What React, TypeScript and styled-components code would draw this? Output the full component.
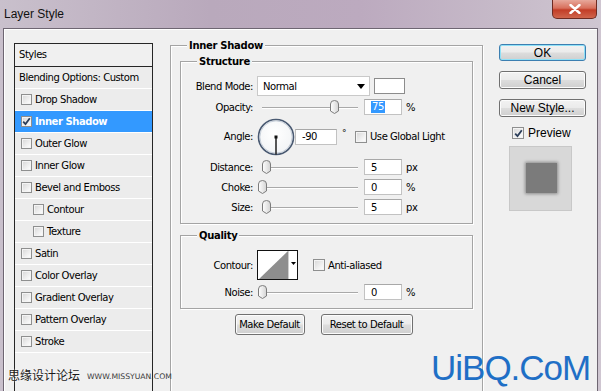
import React from 'react';
import styled, { createGlobalStyle } from 'styled-components';

const Global = createGlobalStyle`
  html, body { margin: 0; padding: 0; }
  body {
    width: 601px; height: 391px; overflow: hidden;
    font-family: "DejaVu Sans", Verdana, sans-serif; font-size: 10px; letter-spacing: -0.45px; color: #000;
  }
  * { box-sizing: border-box; }
`;

const Window = styled.div`
  position: relative;
  width: 601px;
  height: 391px;
  overflow: hidden;
  display: flex;
  flex-direction: column;
  background: linear-gradient(90deg, #c9c0cc 0%, #b9a9bc 35%, #bcaabf 60%, #c7bbc9 85%, #cfc6d1 100%);
`;

const TitleBar = styled.div`
  height: 28px;
  flex: none;
  display: flex;
  align-items: flex-start;
  padding-left: 4px;
`;

const Title = styled.div`
  font-family: "Liberation Sans", Arial, sans-serif;
  font-size: 12px;
  letter-spacing: 0;
  line-height: 14px;
  margin-top: 7px;
  color: #111;
`;

const CloseButton = styled.div`
  margin-left: auto;
  margin-right: 4px;
  width: 45px;
  height: 19px;
  border: 1px solid #6e2b22;
  border-top: none;
  border-radius: 0 0 5px 5px;
  background: linear-gradient(180deg, #e7a89b 0%, #d8705c 45%, #c23d27 55%, #d0654c 100%);
  display: flex;
  align-items: center;
  justify-content: center;
`;

const Body = styled.div`
  flex: 1;
  min-height: 0;
  margin: 0 3px;
  background: #f0f0f0;
  border: 1px solid #6e6672;
  border-bottom: none;
  box-shadow: inset 1px 1px 0 #ffffff;
  display: flex;
  align-items: stretch;
  padding: 14px 0 0 10px;
`;

/* ---------- styles list ---------- */
const StylesList = styled.div`
  width: 139px;
  flex: none;
  border-left: 1px solid #262626;
  border-right: 1px solid #262626;
  display: flex;
  flex-direction: column;
  margin-bottom: -4px;
`;

const ListHeader = styled.div`
  height: 24px;
  border-top: 1px solid #262626;
  border-bottom: 1px solid #262626;
  padding-left: 4px;
  line-height: 22px;
`;

const ListRow = styled.div<{ $selected?: boolean; $indent?: number }>`
  height: 22px;
  flex: none;
  border-bottom: 1px solid #ffffff;
  display: flex;
  align-items: center;
  gap: 3px;
  padding-left: ${(p) => p.$indent ?? 6}px;
  background: ${(p) => (p.$selected ? '#3399ff' : '#ececec')};
  color: ${(p) => (p.$selected ? '#ffffff' : '#000')};
  font-weight: ${(p) => (p.$selected ? 'bold' : 'normal')};
`;

const Box = styled.span<{ $size?: number }>`
  width: ${(p) => p.$size ?? 11}px;
  height: ${(p) => p.$size ?? 11}px;
  flex: none;
  border: 1px solid #8e8f8f;
  background: linear-gradient(135deg, #d6d6d6 0%, #f4f4f4 70%, #ffffff 100%);
  box-shadow: inset 0 0 0 1px #f4f4f4;
  display: inline-flex;
  align-items: center;
  justify-content: center;
`;

const CheckBox: React.FC<{ checked?: boolean; size?: number }> = ({ checked, size }) => (
  <Box $size={size}>
    {checked && (
      <svg width="9" height="9" viewBox="0 0 9 9">
        <path d="M1.2 4.6 L3.5 7 L7.8 1.2" fill="none" stroke="#2b3e5a" strokeWidth="1.8" />
      </svg>
    )}
  </Box>
);

/* ---------- group boxes ---------- */
const Middle = styled.div`
  width: 313px;
  flex: none;
  margin-left: 17px;
  margin-top: 2px;
  display: flex;
  flex-direction: column;
`;

const Group = styled.div<{ $height?: number; $mt?: number; $pt?: number; $px?: number }>`
  position: relative;
  border: 1px solid #a4a4a4;
  box-shadow: inset 1px 1px 0 #ffffff, 1px 1px 0 #ffffff;
  margin-top: ${(p) => p.$mt ?? 0}px;
  padding: ${(p) => p.$pt ?? 14}px ${(p) => p.$px ?? 0}px 0;
  ${(p) => (p.$height ? `height: ${p.$height}px; flex: none;` : 'flex: 1; margin-bottom: -12px;')}
  display: flex;
  flex-direction: column;
`;

const GroupTitle = styled.div`
  position: absolute;
  top: -7px;
  left: 16px;
  padding: 0 2px;
  line-height: 13px;
  font-weight: bold;
  letter-spacing: -0.3px;
  background: #f0f0f0;
`;

const Row = styled.div<{ $h: number; $mt?: number }>`
  height: ${(p) => p.$h}px;
  margin-top: ${(p) => p.$mt ?? 0}px;
  flex: none;
  display: flex;
  align-items: center;
`;

const Label = styled.div`
  width: 72px;
  flex: none;
  text-align: right;
  margin-right: 4px;
`;

const Select = styled.div`
  width: 113px;
  height: 20px;
  background: #ffffff;
  border: 1px solid #c9c9c9;
  display: flex;
  align-items: center;
  justify-content: space-between;
  padding: 0 4px 0 5px;
`;

const Swatch = styled.div`
  width: 31px;
  height: 16px;
  margin-left: 4px;
  background: #ffffff;
  border: 1px solid #8c8c8c;
`;

const SliderWrap = styled.div`
  position: relative;
  width: 107px;
  height: 16px;
  flex: none;
`;

const Track = styled.div`
  position: absolute;
  left: 5px;
  top: 8px;
  width: 96px;
  height: 2px;
  border-top: 1px solid #a9a9a9;
  border-bottom: 1px solid #ffffff;
`;

const ThumbHolder = styled.div`
  position: absolute;
  top: 1px;
  width: 9px;
  height: 14px;
`;

const Slider: React.FC<{ pos: number }> = ({ pos }) => (
  <SliderWrap>
    <Track />
    <ThumbHolder style={{ left: 5 + pos - 4.5 }}>
      <svg width="9" height="14" viewBox="0 0 9 14">
        <defs>
          <linearGradient id="tg" x1="0" y1="0" x2="1" y2="0">
            <stop offset="0" stopColor="#ffffff" />
            <stop offset="1" stopColor="#d4d4d4" />
          </linearGradient>
        </defs>
        <path d="M0.5 4 Q0.5 0.5 4.5 0.5 Q8.5 0.5 8.5 4 L8.5 11 L4.5 13.5 L0.5 11 Z" fill="url(#tg)" stroke="#7c7c7c" />
      </svg>
    </ThumbHolder>
  </SliderWrap>
);

const Input = styled.div<{ $w?: number }>`
  width: ${(p) => p.$w ?? 38}px;
  height: 16px;
  flex: none;
  background: #ffffff;
  border: 1px solid #c2c2c2;
  border-top-color: #a8a8a8;
  padding-left: 6px;
  display: flex;
  align-items: center;
`;

const Highlight = styled.span`
  background: #3399ff;
  color: #ffffff;
  padding: 0 1px;
  line-height: 12px;
`;

const Unit = styled.span`
  margin-left: 4px;
`;

const Degree = styled.span`
  width: 13px;
  margin-left: 5px;
  align-self: flex-start;
  margin-top: 10px;
  font-size: 9px;
`;

const CheckLabel = styled.span`
  margin-left: 3px;
`;

const ButtonRow = styled.div`
  display: flex;
  justify-content: center;
  gap: 16px;
  margin-top: 5px;
  margin-left: -6px;
`;

const Button = styled.div<{ $w: number; $h?: number; $mt?: number; $default?: boolean; $big?: boolean }>`
  width: ${(p) => p.$w}px;
  height: ${(p) => p.$h ?? 21}px;
  margin-top: ${(p) => p.$mt ?? 0}px;
  flex: none;
  border: 1px solid ${(p) => (p.$default ? '#3c7fb1' : '#707070')};
  border-radius: 3px;
  background: linear-gradient(180deg, #f2f2f2 0%, #ebebeb 48%, #dddddd 52%, #cfcfcf 100%);
  box-shadow: inset 0 0 0 1px ${(p) => (p.$default ? '#8fe1f7' : '#fcfcfc')};
  display: flex;
  align-items: center;
  justify-content: center;
  font-family: ${(p) => (p.$big ? '"Liberation Sans", Arial, sans-serif' : '"DejaVu Sans", Verdana, sans-serif')};
  font-size: ${(p) => (p.$big ? 12 : 10)}px;
  letter-spacing: ${(p) => (p.$big ? 0 : -0.45)}px;
`;

const ContourBox = styled.div`
  width: 41px;
  height: 30px;
  border: 1px solid #111;
  background: #fff;
  display: flex;
`;

const ContourArrow = styled.div`
  flex: 1;
  border-left: 1px solid #cfcfcf;
  display: flex;
  align-items: center;
  justify-content: center;
  padding-bottom: 4px;
`;

/* ---------- right column ---------- */
const RightCol = styled.div`
  width: 87px;
  flex: none;
  margin-left: 16px;
  margin-top: 1px;
  display: flex;
  flex-direction: column;
`;

const PreviewRow = styled.div`
  margin-top: 10px;
  height: 12px;
  padding-left: 13px;
  display: flex;
  align-items: center;
  gap: 4px;
  font-family: "Liberation Sans", Arial, sans-serif;
  font-size: 12px;
  letter-spacing: 0;
`;

const PreviewSwatch = styled.div`
  margin-top: 7px;
  margin-left: 10px;
  width: 63px;
  height: 65px;
  background: #d8d8d8;
  border: 1px solid #c8c8c8;
  padding: 16px 0 0 16px;
`;

const PreviewSquare = styled.div`
  width: 31px;
  height: 30px;
  background: #7b7b7b;
  box-shadow: 0 0 3px 1px #8a8a8a;
  filter: blur(0.6px);
`;

/* ---------- watermarks ---------- */
const Watermark = styled.div`
  position: absolute;
  left: 8px;
  top: 366px;
  display: flex;
  align-items: center;
  gap: 7px;
  letter-spacing: 0;
`;

const WmCJK = styled.span`
  font-family: "Noto Sans CJK SC", sans-serif;
  font-size: 12px;
  color: #1a1a1a;
  text-shadow: 0 0 2px #ffffff;
`;

const WmLatin = styled.span`
  font-family: "DejaVu Sans", sans-serif;
  font-size: 7.7px;
  color: #3a3a3a;
  margin-top: 3px;
`;

const Brand = styled.div`
  position: absolute;
  left: 431px;
  top: 350px;
  font-family: "Liberation Sans", Arial, sans-serif;
  font-size: 35px;
  line-height: 35px;
  letter-spacing: -1px;
  color: #1f6fc6;
`;

const styleRows: { name: string; checked?: boolean; selected?: boolean; indent?: number }[] = [
  { name: 'Drop Shadow' },
  { name: 'Inner Shadow', checked: true, selected: true },
  { name: 'Outer Glow' },
  { name: 'Inner Glow' },
  { name: 'Bevel and Emboss' },
  { name: 'Contour', indent: 18 },
  { name: 'Texture', indent: 18 },
  { name: 'Satin' },
  { name: 'Color Overlay' },
  { name: 'Gradient Overlay' },
  { name: 'Pattern Overlay' },
  { name: 'Stroke' },
];

const Dial = () => (
  <svg width="38" height="38" viewBox="0 0 38 38" style={{ flex: 'none' }}>
    <defs>
      <radialGradient id="dg" cx="0.45" cy="0.4" r="0.6">
        <stop offset="0" stopColor="#ffffff" />
        <stop offset="1" stopColor="#f2f4f6" />
      </radialGradient>
    </defs>
    <circle cx="19" cy="19" r="17.5" fill="url(#dg)" stroke="#4a5a72" strokeWidth="1.6" />
    <circle cx="19" cy="19" r="16.2" fill="none" stroke="#b9c3cf" strokeWidth="0.8" />
    <line x1="19" y1="19" x2="19" y2="36.5" stroke="#111" strokeWidth="1.4" />
    <rect x="17.5" y="17.5" width="3" height="3" fill="#111" />
  </svg>
);

export default function App() {
  return (
    <>
      <Global />
      <Window>
        <TitleBar>
          <Title>Layer Style</Title>
          <CloseButton>
            <svg width="12" height="10" viewBox="0 0 12 10">
              <path d="M1.5 1 L10.5 9 M10.5 1 L1.5 9" stroke="#ffffff" strokeWidth="2.4" strokeLinecap="round" />
            </svg>
          </CloseButton>
        </TitleBar>
        <Body>
          <StylesList>
            <ListHeader>Styles</ListHeader>
            <ListRow $indent={4}>Blending Options: Custom</ListRow>
            {styleRows.map((r) => (
              <ListRow key={r.name} $selected={r.selected} $indent={r.indent}>
                <CheckBox checked={r.checked} />
                <span>{r.name}</span>
              </ListRow>
            ))}
          </StylesList>

          <Middle>
            <Group $pt={15} $px={9}>
              <GroupTitle>Inner Shadow</GroupTitle>
              <Group $height={163}>
                <GroupTitle>Structure</GroupTitle>
                <Row $h={20}>
                  <Label>Blend Mode:</Label>
                  <Select>
                    <span>Normal</span>
                    <svg width="8" height="5" viewBox="0 0 8 5">
                      <path d="M0 0 H8 L4 5 Z" fill="#000" />
                    </svg>
                  </Select>
                  <Swatch />
                </Row>
                <Row $h={16} $mt={3}>
                  <Label>Opacity:</Label>
                  <Slider pos={72} />
                  <Input>
                    <Highlight>75</Highlight>
                  </Input>
                  <Unit>%</Unit>
                </Row>
                <Row $h={37} $mt={3}>
                  <Label>Angle:</Label>
                  <Dial />
                  <Input $w={42}>-90</Input>
                  <Degree>°</Degree>
                  <CheckBox size={12} />
                  <CheckLabel>Use Global Light</CheckLabel>
                </Row>
                <Row $h={16} $mt={4}>
                  <Label>Distance:</Label>
                  <Slider pos={4} />
                  <Input>5</Input>
                  <Unit>px</Unit>
                </Row>
                <Row $h={16} $mt={4}>
                  <Label>Choke:</Label>
                  <Slider pos={0} />
                  <Input>0</Input>
                  <Unit>%</Unit>
                </Row>
                <Row $h={16} $mt={4}>
                  <Label>Size:</Label>
                  <Slider pos={4} />
                  <Input>5</Input>
                  <Unit>px</Unit>
                </Row>
              </Group>

              <Group $height={74} $mt={11}>
                <GroupTitle>Quality</GroupTitle>
                <Row $h={30}>
                  <Label>Contour:</Label>
                  <ContourBox>
                    <svg width="30" height="28" viewBox="0 0 30 28" style={{ flex: 'none' }}>
                      <path d="M1 28 L30 0 L30 28 Z" fill="#8e8e8e" />
                    </svg>
                    <ContourArrow>
                      <svg width="5" height="3" viewBox="0 0 5 3">
                        <path d="M0 0 H5 L2.5 3 Z" fill="#000" />
                      </svg>
                    </ContourArrow>
                  </ContourBox>
                  <span style={{ width: 15 }} />
                  <CheckBox size={12} />
                  <CheckLabel>Anti-aliased</CheckLabel>
                </Row>
                <Row $h={16} $mt={4}>
                  <Label>Noise:</Label>
                  <Slider pos={0} />
                  <Input>0</Input>
                  <Unit>%</Unit>
                </Row>
              </Group>

              <ButtonRow>
                <Button $w={70}>Make Default</Button>
                <Button $w={92}>Reset to Default</Button>
              </ButtonRow>
            </Group>
          </Middle>

          <RightCol>
            <Button $w={87} $h={17} $default $big>OK</Button>
            <Button $w={87} $h={18} $mt={10} $big>Cancel</Button>
            <Button $w={87} $h={18} $mt={10} $big>New Style...</Button>
            <PreviewRow>
              <CheckBox checked size={12} />
              <span>Preview</span>
            </PreviewRow>
            <PreviewSwatch>
              <PreviewSquare />
            </PreviewSwatch>
          </RightCol>
        </Body>
        <Watermark>
          <WmCJK>思缘设计论坛</WmCJK>
          <WmLatin>WWW.MISSYUAN.COM</WmLatin>
        </Watermark>
        <Brand>UiBQ.CoM</Brand>
      </Window>
    </>
  );
}
